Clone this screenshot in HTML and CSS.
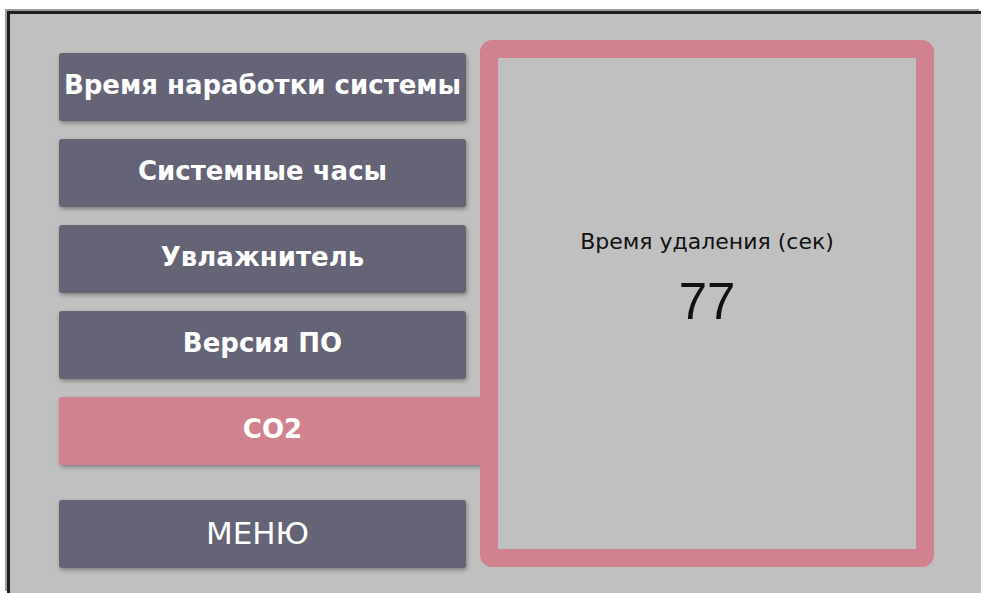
FILE: index.html
```html
<!DOCTYPE html>
<html lang="ru">
<head>
<meta charset="utf-8">
<title>CO2</title>
<link rel="stylesheet" href="styles.css">
</head>
<body>
  <div class="screen">
    <div class="layout">
      <nav class="menu">
        <div class="btn">Время наработки системы</div>
        <div class="btn">Системные часы</div>
        <div class="btn">Увлажнитель</div>
        <div class="btn">Версия ПО</div>
        <div class="btn active">CO2</div>
        <div class="btn back">МЕНЮ</div>
      </nav>
      <section class="panel">
        <div class="label">Время удаления (сек)</div>
        <div class="value">77</div>
      </section>
    </div>
  </div>
</body>
</html>
```

FILE: styles.css
```css
html, body {
  margin: 0;
  padding: 0;
  background: #ffffff;
  overflow: hidden;
  width: 981px;
  height: 593px;
}

/* device screen: framed on top and left, runs off the other edges */
.screen {
  margin: 11px 0 0 7px;
  width: 974px;
  height: 582px;
  overflow: hidden;
  background: #c0c0c0;
  border-top: 3px solid #1e1e1e;
  border-left: 3px solid #1e1e1e;
  box-shadow: -2px -2px 0 0 #9c9c9c;
  box-sizing: border-box;
}

.layout {
  display: flex;
  align-items: flex-start;
  padding: 26px 0 0 49px;
}

.menu {
  display: flex;
  flex-direction: column;
  gap: 18px;
  width: 407px;
  flex: none;
  padding-top: 13px;
}

.btn {
  height: 68px;
  background: #646476;
  border-radius: 3px;
  box-shadow: 1px 2px 4px rgba(0, 0, 0, 0.35);
  color: #ffffff;
  font-family: "DejaVu Sans", "Open Sans", sans-serif;
  font-weight: 700;
  font-size: 26px;
  display: flex;
  align-items: center;
  justify-content: center;
  padding-bottom: 4px;
  box-sizing: border-box;
  white-space: nowrap;
}

/* selected item joins the value frame */
.btn.active {
  background: #d0838f;
  margin-right: -20px;
  border-radius: 3px 0 0 3px;
}

.btn.back {
  margin-top: 17px;
  font-weight: 400;
  font-size: 31px;
  padding: 0 10px 2px 0;
}

.panel {
  margin-left: 14px;
  flex: none;
  width: 418px;
  height: 320px;
  border: 18px solid #d0838f;
  border-radius: 12px;
  display: flex;
  flex-direction: column;
  align-items: center;
  padding-top: 171px;
  box-sizing: content-box;
  color: #111111;
  position: relative;
}

.label {
  font-family: "DejaVu Sans", "Liberation Sans", sans-serif;
  font-size: 22px;
}

.value {
  font-family: "Liberation Sans", Arial, sans-serif;
  font-size: 51px;
  margin-top: 18px;
}
```
